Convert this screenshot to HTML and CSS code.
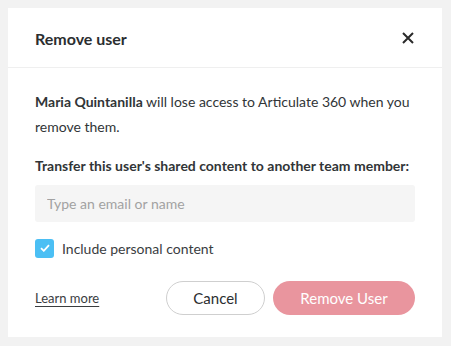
FILE: index.html
```html
<!DOCTYPE html>
<html>
<head>
	<meta charset="utf-8">
	<title>Remove user</title>
	<link rel="stylesheet" href="styles.css">
</head>
<body>
<div class="modal">
	<div class="modal-head">
		<h2>Remove user</h2>
		<a class="close" href="javascript:;">
			<svg width="12" height="12" viewBox="0 0 12 12"><path d="M1 1L11 11M11 1L1 11" stroke="#2a2a2a" stroke-width="2" fill="none"/></svg>
		</a>
	</div>
	<div class="modal-body">
		<p class="intro"><strong>Maria Quintanilla</strong> will lose access to Articulate 360 when you remove them.</p>
		<label class="field-label" for="transfer">Transfer this user's shared content to another team member:</label>
		<input id="transfer" class="f-text" placeholder="Type an email or name">
		<label class="check">
			<span class="box">
				<svg width="10" height="8" viewBox="0 0 10 8"><path d="M1 4.2L3.8 6.8L9 1.2" stroke="#fff" stroke-width="1.8" fill="none"/></svg>
			</span>
			Include personal content
		</label>
		<div class="modal-foot">
			<a class="learn" href="javascript:;">Learn more</a>
			<div class="btns">
				<button class="btn btn-cancel">Cancel</button>
				<button class="btn btn-remove">Remove User</button>
			</div>
		</div>
	</div>
</div>
</body>
</html>
```
FILE: styles.css
```css
body,div,h2,p{margin:0;padding:0;}
body{background:#f2f2f2;color:#313537;font:14px/25px Lato,"Open Sans",sans-serif;padding:8px;}
.modal{width:434px;height:329px;background:#fff;box-sizing:border-box;}
.modal-head{height:60px;box-sizing:border-box;border-bottom:1px solid #efefef;padding:0 27px;display:flex;align-items:center;justify-content:space-between;}
.modal-head h2{font-size:16px;font-weight:700;color:#2b2e30;padding-top:2px;}
.close{display:flex;margin-right:1px;}
.modal-body{padding:21px 27px 0;}
.intro strong{font-weight:700;}
.field-label{display:block;font-weight:700;margin-top:14px;}
.f-text{display:block;width:100%;box-sizing:border-box;height:37px;margin-top:7px;border:0;border-radius:3px;background:#f5f5f5;padding:0 12px;font:14px Lato,sans-serif;color:#333;outline:none;}
.f-text::placeholder{color:#a2a2a2;}
.check{display:flex;align-items:center;margin-top:16px;height:20px;color:#3a3d3f;}
.check .box{width:19px;height:19px;border-radius:3px;background:#4bbff4;display:flex;align-items:center;justify-content:center;margin-right:8px;}
.modal-foot{display:flex;align-items:center;justify-content:space-between;margin-top:23px;}
.learn{color:#3a3d3f;font-size:13px;text-decoration:underline;text-underline-offset:3px;}
.btns{display:flex;gap:8px;}
.btn{height:34px;border-radius:17px;font:15px Lato,sans-serif;cursor:pointer;}
.btn-cancel{width:99px;background:#fff;border:1px solid #cfcfcf;color:#2b2e30;}
.btn-remove{width:142px;background:#e9959e;border:0;color:#fff;}
```
